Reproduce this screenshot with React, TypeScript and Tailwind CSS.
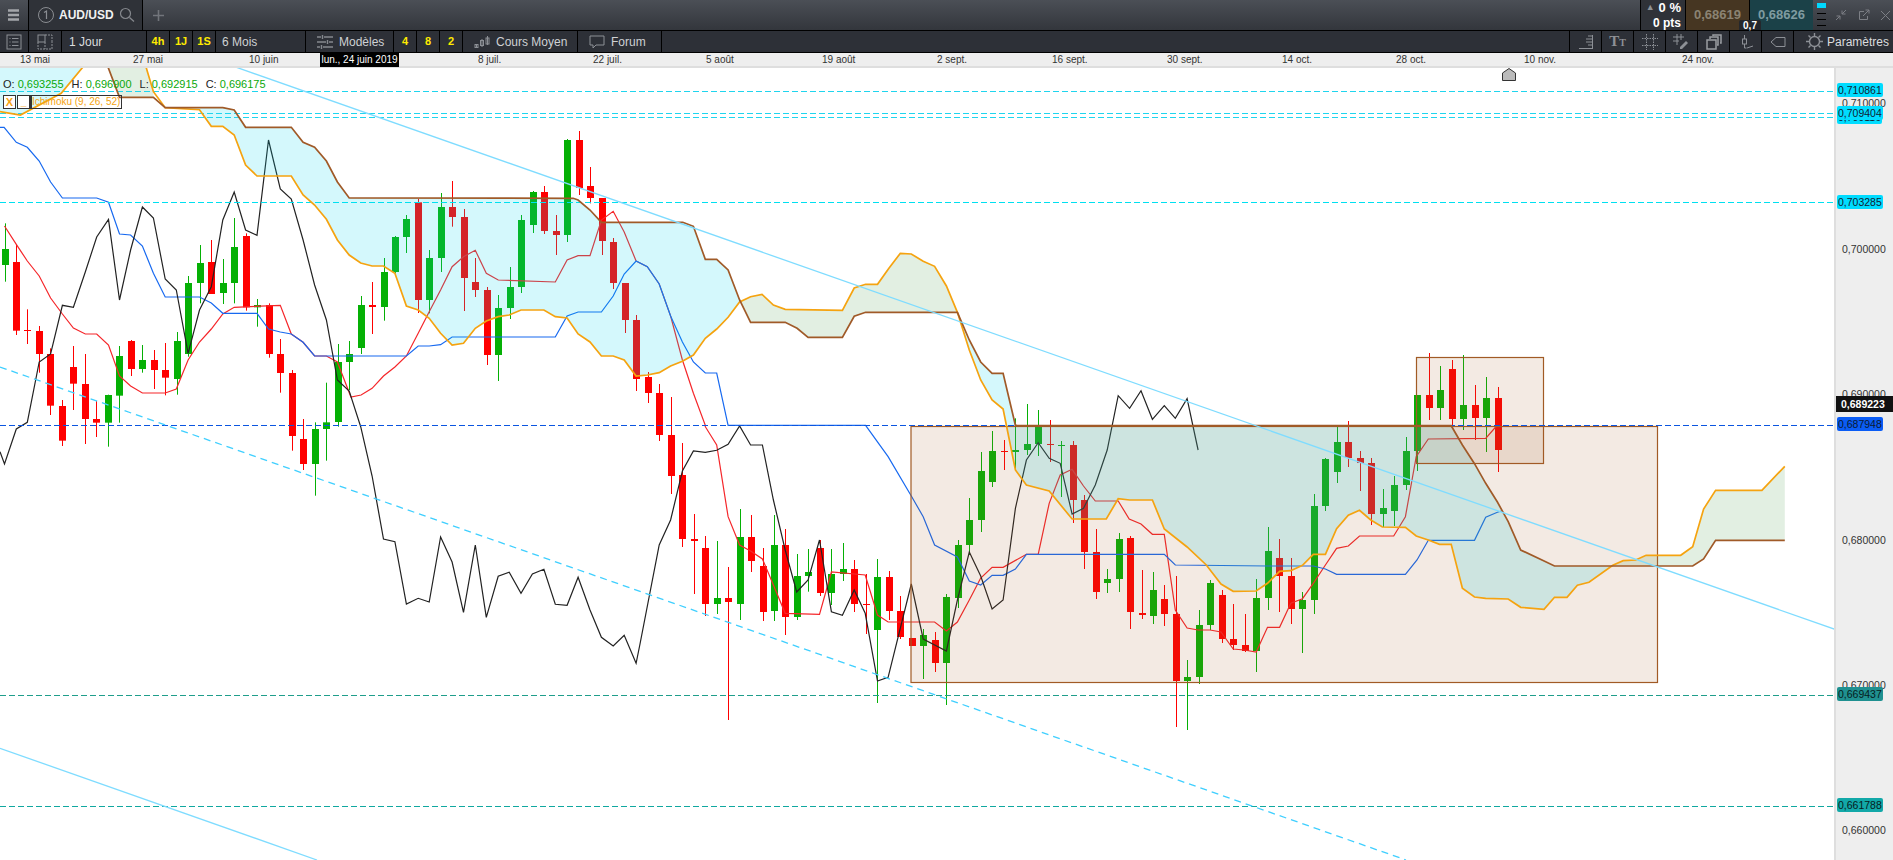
import React from 'react';

type Pt = [number, number];
type Origin = { x: number; y: number; sx: number };

// readings were taken off 3 crops of the chart, so each keeps its own origin
const C3: Origin = { x: 0, y: 60, sx: 0.408 };
const C7: Origin = { x: 640, y: 60, sx: 0.408 };
const C4: Origin = { x: 640, y: 400, sx: 0.408 };
const C5: Origin = { x: 1240, y: 330, sx: 0.4165 };

const map = (o: Origin, pts: number[][]): Pt[] => pts.map(([x, y]) => [o.x + x * o.sx, o.y + y / 3]);
const toStr = (pts: Pt[]) => pts.map(([x, y]) => `${x.toFixed(1)},${y.toFixed(1)}`).join(' ');

const yAt = (path: Pt[], x: number) => {
  for (let i = 1; i < path.length; i++) {
    const [x0, y0] = path[i - 1];
    const [x1, y1] = path[i];
    if (x >= x0 && x <= x1) return x1 === x0 ? y1 : y0 + ((x - x0) / (x1 - x0)) * (y1 - y0);
  }
  return path[path.length - 1][1];
};

const between = (path: Pt[], x0: number, x1: number): Pt[] => [
  [x0, yAt(path, x0)],
  ...path.filter(([x]) => x > x0 && x < x1),
  [x1, yAt(path, x1)],
];

// wickTop, bodyTop, bodyBottom, wickBottom, 1 = green
const candlesA = [
  [490, 567, 615, 665, 1], [553, 606, 812, 825, 0], [748, 810, 813, 852, 0], [798, 813, 882, 938, 0], [865, 882, 1037, 1065, 0],
  [1020, 1038, 1142, 1158, 0], [858, 921, 971, 1050, 0], [882, 972, 1077, 1152, 0], [1023, 1077, 1088, 1131, 0], [1004, 1005, 1088, 1160, 1],
  [858, 888, 1007, 1088, 1], [840, 843, 927, 948, 0], [855, 900, 927, 938, 1], [870, 900, 930, 987, 0], [849, 930, 953, 1006, 0],
  [816, 843, 957, 1004, 1], [648, 669, 882, 890, 1], [555, 609, 669, 730, 1], [540, 606, 702, 702, 0], [597, 669, 699, 732, 1],
  [474, 561, 669, 730, 1], [520, 528, 742, 752, 0], [717, 735, 742, 800, 1], [730, 735, 882, 893, 0], [837, 882, 939, 998, 0],
  [930, 939, 1128, 1172, 0], [1077, 1137, 1212, 1230, 0], [1087, 1107, 1212, 1307, 1], [968, 1087, 1107, 1202, 1], [852, 906, 1086, 1100, 1],
  [843, 882, 906, 990, 1], [708, 735, 864, 882, 1], [666, 735, 741, 822, 0], [594, 636, 741, 782, 1], [528, 531, 636, 640, 1],
  [465, 477, 531, 579, 1], [417, 427, 720, 759, 0], [570, 594, 720, 760, 1], [399, 441, 594, 636, 1], [363, 441, 471, 500, 0],
  [447, 471, 654, 753, 0], [594, 666, 690, 711, 0], [681, 690, 885, 915, 0], [705, 744, 885, 963, 1], [621, 681, 744, 777, 1],
  [465, 480, 681, 699, 1], [393, 396, 495, 519, 1], [378, 396, 513, 522, 0], [465, 513, 525, 585, 0], [237, 240, 525, 546, 1],
  [213, 240, 384, 405, 0], [321, 378, 414, 430, 0], [414, 414, 543, 585, 0], [534, 546, 669, 687, 0], [669, 669, 780, 819, 0],
  [765, 780, 957, 993, 0], [936, 951, 999, 1029, 0], [972, 999, 1125, 1143, 0],
];
const candlesB = [
  [-9, 105, 228, 282, 0], [129, 225, 417, 441, 0], [342, 417, 423, 582, 0], [408, 444, 612, 648, 0], [423, 594, 612, 642, 1],
  [501, 594, 606, 960, 0], [327, 411, 612, 660, 1], [345, 411, 483, 516, 0], [444, 498, 636, 663, 0], [345, 435, 633, 663, 1],
  [387, 435, 651, 705, 0], [462, 528, 651, 660, 1], [447, 516, 528, 575, 1], [420, 444, 579, 588, 0], [447, 522, 579, 615, 1],
  [429, 507, 522, 543, 1], [480, 507, 612, 636, 0], [522, 612, 615, 702, 0], [477, 531, 690, 909, 1], [513, 531, 633, 660, 0],
  [588, 633, 711, 717, 0], [714, 714, 738, 738, 0], [687, 705, 738, 837, 1], [696, 720, 789, 816, 0], [582, 591, 789, 915, 1],
  [420, 435, 594, 624, 1], [294, 360, 435, 465, 1], [156, 213, 360, 396, 1], [93, 153, 246, 261, 1], [120, 153, 156, 210, 0],
  [55, 150, 156, 210, 1], [12, 132, 150, 165, 1], [30, 81, 132, 168, 1], [60, 132, 135, 186, 0], [123, 135, 138, 291, 1],
  [123, 135, 300, 369, 0], [285, 300, 456, 507, 0], [387, 456, 576, 597, 0], [507, 537, 549, 579, 1], [399, 417, 537, 576, 1],
  [408, 414, 636, 687, 0], [510, 639, 645, 657, 0], [516, 570, 648, 672, 1], [555, 597, 642, 678, 0], [528, 642, 843, 981, 0],
  [780, 831, 843, 990, 1], [630, 675, 831, 852, 1], [540, 549, 675, 690, 1], [570, 585, 717, 729, 0], [612, 717, 735, 750, 0],
  [642, 735, 753, 756, 0], [537, 594, 753, 816, 1],
];
const candlesC = [
  [591, 663, 804, 840, 1], [627, 684, 738, 846, 0], [684, 738, 837, 882, 0], [786, 810, 837, 969, 1], [492, 528, 810, 852, 1],
  [384, 387, 528, 543, 1], [288, 336, 426, 459, 1], [273, 336, 384, 411, 0], [363, 384, 399, 483, 0], [384, 399, 552, 585, 0],
  [477, 534, 552, 591, 1], [438, 465, 543, 588, 1], [321, 363, 465, 480, 1], [195, 195, 363, 423, 1], [69, 195, 234, 270, 0],
  [108, 180, 234, 270, 1], [90, 117, 267, 288, 0], [75, 225, 267, 300, 1], [165, 225, 264, 330, 0], [141, 204, 264, 366, 1],
  [171, 204, 360, 426, 0],
];
const candles = [
  ...candlesA.map((c) => ({ c, oy: C3.y })),
  ...candlesB.map((c) => ({ c, oy: C4.y })),
  ...candlesC.map((c) => ({ c, oy: C5.y })),
];

const kijun: Pt[] = [
  ...map(C3, [[0, 202], [10, 202], [40, 247], [67, 262], [96, 303], [124, 366], [153, 414], [237, 414], [266, 427], [293, 522], [320, 525], [349, 558], [376, 640], [405, 711], [489, 711], [518, 729], [546, 760], [630, 760], [658, 807], [687, 816], [714, 822], [743, 847], [771, 888], [996, 888], [1025, 858], [1052, 858], [1080, 854], [1108, 831], [1361, 831], [1390, 768], [1417, 756], [1474, 756], [1503, 708], [1530, 642], [1559, 603]]),
  ...map(C7, [[18, 620], [47, 672], [75, 768], [104, 846], [131, 906], [160, 939], [188, 939], [216, 1096]]),
  ...map(C4, [[553, 76], [608, 170], [665, 288], [694, 350], [722, 435], [778, 471], [807, 543], [835, 555], [863, 526], [890, 526], [920, 507], [947, 463], [1285, 463], [1312, 495], [1538, 498]]),
  ...map(C5, [[176, 708], [205, 717], [232, 733], [397, 733], [425, 690], [452, 631], [563, 631], [590, 562], [618, 547], [628, 543]]),
];

const tenkan: Pt[] = [
  ...map(C3, [[11, 498], [40, 553], [67, 603], [96, 648], [124, 714], [153, 762], [180, 804], [209, 822], [237, 822], [266, 855], [293, 948], [320, 978], [349, 999], [405, 999], [432, 987], [461, 900], [489, 846], [518, 807], [546, 762], [574, 742], [687, 736], [714, 822], [743, 847], [771, 888], [800, 888], [827, 906], [860, 1011], [885, 1005], [912, 985], [940, 948], [968, 921], [996, 888], [1025, 820], [1052, 755], [1080, 690], [1108, 620], [1136, 590], [1165, 571], [1192, 640], [1221, 660], [1361, 666], [1390, 600], [1417, 587], [1446, 587], [1474, 480], [1503, 454], [1530, 516], [1559, 603]]),
  ...map(C7, [[18, 620], [47, 672], [75, 768], [104, 900], [131, 1000], [160, 1096]]),
  ...map(C4, [[160, 80], [188, 135], [216, 350], [244, 435], [271, 453], [300, 477], [327, 555], [356, 640], [440, 643], [469, 516], [552, 525], [582, 645], [608, 666], [722, 666], [751, 693], [778, 666], [807, 600], [835, 534], [863, 502], [890, 502], [947, 463], [976, 463], [1003, 310], [1030, 225], [1059, 208], [1087, 258], [1116, 303], [1172, 303], [1199, 357], [1228, 372], [1256, 403], [1285, 403], [1312, 630], [1341, 684], [1368, 690], [1397, 690], [1424, 696], [1454, 747], [1481, 750]]),
  ...map(C5, [[39, 966], [66, 892], [95, 892], [122, 820], [150, 806], [176, 760], [205, 705], [232, 655], [260, 648], [287, 618], [369, 618], [397, 560], [423, 380], [452, 327], [590, 325], [618, 285]]),
];

const chikou: Pt[] = [
  ...map(C3, [[0, 1175], [11, 1212], [40, 1107], [67, 1087], [96, 906], [124, 882], [153, 736], [180, 742], [209, 636], [237, 531], [266, 478], [293, 720], [320, 570], [349, 441], [376, 474], [405, 657], [432, 690], [461, 880], [489, 750], [518, 680], [546, 480], [574, 396], [602, 510], [630, 526], [658, 240], [687, 387], [714, 417], [743, 540], [771, 675], [800, 780], [827, 960], [856, 993], [884, 1100], [912, 1248], [940, 1437], [968, 1445], [996, 1632], [1025, 1615], [1052, 1626], [1080, 1431], [1108, 1506], [1136, 1657], [1165, 1455], [1192, 1672], [1221, 1549], [1248, 1537], [1277, 1600], [1305, 1542], [1333, 1528], [1361, 1633], [1390, 1636], [1417, 1552], [1446, 1650], [1474, 1732], [1503, 1758], [1530, 1726], [1559, 1810]]),
  ...map(C4, [[0, 732], [47, 435], [75, 360], [104, 213], [131, 153], [160, 157], [188, 151], [216, 133], [244, 78], [271, 135], [300, 135], [327, 300], [356, 450], [384, 576], [412, 540], [440, 420], [469, 635], [496, 646], [525, 570], [552, 640], [582, 843], [608, 832], [665, 552], [694, 717], [751, 753], [778, 600], [807, 456], [835, 528], [863, 627], [890, 600], [920, 325], [947, 180], [976, 128], [1003, 175], [1030, 190], [1059, 342], [1087, 325], [1116, 255], [1145, 150]]),
  ...map(C7, [[1172, 1007], [1200, 1045], [1228, 992], [1256, 1078], [1285, 1037], [1312, 1075], [1341, 1016], [1368, 1170]]),
];

const spanAHead: Pt[] = map(C3, [[0, 155], [50, 165], [150, 100], [204, 20]]);
const spanA: Pt[] = [
  ...map(C3, [[358, 22], [376, 95], [405, 143], [489, 149], [518, 199], [546, 199], [574, 225], [602, 315], [630, 348], [714, 348], [743, 405], [771, 435], [800, 478], [827, 540], [856, 585], [884, 609], [912, 618], [940, 618], [968, 640], [996, 738], [1025, 750], [1052, 775], [1080, 820], [1108, 855], [1136, 850], [1165, 805], [1192, 783], [1221, 770], [1248, 765], [1277, 750], [1333, 750], [1361, 770], [1390, 774], [1417, 822], [1446, 846], [1474, 888], [1503, 888], [1530, 900], [1559, 948]]),
  ...map(C7, [[18, 945], [47, 938], [75, 918], [104, 904], [131, 885], [160, 835], [188, 807], [216, 772], [244, 726], [271, 710], [299, 703], [327, 735], [356, 748], [496, 751], [525, 684], [553, 673], [582, 673], [610, 625], [638, 580], [665, 582], [694, 604], [722, 619], [751, 678], [778, 757], [807, 870], [835, 960], [863, 1020], [890, 1047]]),
  ...map(C4, [[920, 210], [947, 255], [1003, 273], [1059, 357], [1143, 357], [1172, 296], [1200, 300], [1256, 300], [1285, 387], [1341, 441], [1388, 495], [1424, 552], [1454, 574], [1510, 573]]),
  ...map(C5, [[66, 760], [95, 724], [122, 722], [150, 706], [176, 673], [205, 673], [232, 596], [260, 556], [287, 541], [314, 570], [342, 591], [397, 592], [423, 618], [452, 630], [479, 643], [507, 643], [534, 775], [563, 801], [590, 805], [644, 807], [674, 832], [730, 838], [755, 802], [785, 802], [810, 766], [838, 757], [895, 706], [920, 692], [950, 690], [975, 676], [1058, 676], [1087, 650], [1113, 537], [1142, 481], [1253, 481], [1308, 409]]),
];

const spanB: Pt[] = [
  ...map(C3, [[265, 22], [293, 112], [376, 112], [405, 143], [546, 143], [574, 150], [602, 202], [714, 202], [743, 247], [771, 262], [800, 303], [827, 366], [856, 414], [1405, 415], [1417, 420], [1446, 450], [1474, 487]]),
  ...map(C7, [[105, 487], [131, 499], [160, 598], [188, 598], [216, 630], [244, 720], [271, 787], [356, 787], [385, 805], [412, 832], [496, 832], [525, 769], [553, 757], [778, 757], [807, 840], [835, 906], [863, 940], [890, 940], [920, 1096]]),
  ...map(C5, [[507, 287], [534, 345], [563, 401], [590, 460], [618, 516], [644, 575], [674, 660], [725, 690], [755, 708], [1087, 708], [1113, 687], [1142, 631], [1308, 631]]),
];

const cloud = (x0: number, x1: number): Pt[] => [...between(spanB, x0, x1), ...between(spanA, x0, x1).reverse()];

const cyanClouds: Pt[][] = [
  [[0, 68], [83, 68], [83, 66.7], ...[...spanAHead].reverse()],
  cloud(165.2, 741),
  cloud(957.4, 1612.8),
];
const greenClouds: Pt[][] = [
  map(C3, [[265, 22], [358, 22], [376, 95], [376, 112], [293, 112]]),
  cloud(741, 957.4),
  cloud(1612.8, 1784.8),
];

const hLines = [
  { y: 91.5, color: '#1fd5ee' },
  { y: 113.5, color: '#1fd5ee' },
  { y: 117.5, color: '#1fd5ee' },
  { y: 202.5, color: '#00e0f0' },
  { y: 425.5, color: '#0b55e0' },
  { y: 695.5, color: '#1f9e8b' },
  { y: 806.5, color: '#10a8a0' },
];

const dates = [
  { x: 20, t: '13 mai' }, { x: 133, t: '27 mai' }, { x: 249, t: '10 juin' }, { x: 478, t: '8 juil.' },
  { x: 593, t: '22 juil.' }, { x: 706, t: '5 août' }, { x: 822, t: '19 août' }, { x: 937, t: '2 sept.' },
  { x: 1052, t: '16 sept.' }, { x: 1167, t: '30 sept.' }, { x: 1282, t: '14 oct.' }, { x: 1396, t: '28 oct.' },
  { x: 1524, t: '10 nov.' }, { x: 1682, t: '24 nov.' },
];

const ticks = [
  { y: 103, t: '0,710000' }, { y: 249, t: '0,700000' }, { y: 394, t: '0,690000' },
  { y: 540, t: '0,680000' }, { y: 685, t: '0,670000' }, { y: 830, t: '0,660000' },
];

const badges = [
  { y: 90, t: '0,710861', cls: 'bg-[#00dcff] text-[#123]' },
  { y: 117, t: '0,709116', cls: 'bg-[#00dcff] text-[#123]' },
  { y: 113, t: '0,709404', cls: 'bg-[#00dcff] text-[#123]' },
  { y: 202, t: '0,703285', cls: 'bg-[#00dcff] text-[#123]' },
  { y: 424, t: '0,687948', cls: 'bg-[#0a5cf5] text-[#0a1a33]' },
  { y: 694, t: '0,669437', cls: 'bg-[#1f9090] text-[#062020]' },
  { y: 805, t: '0,661788', cls: 'bg-[#12a8a8] text-[#062020]' },
];

const ic = 'fill-none stroke-[#8d9096]';

const Cell = ({ w, children, className = '' }: { w: string; children?: React.ReactNode; className?: string }) => (
  <div className={`flex h-full shrink-0 items-center border-r border-black ${w} ${className}`}>{children}</div>
);

const Yellow = ({ w, t }: { w: string; t: string }) => (
  <Cell w={w} className="justify-center text-[11px] font-bold text-[#ffea00]">{t}</Cell>
);

const IconCell = ({ children }: { children: React.ReactNode }) => (
  <div className="flex h-full w-[32px] shrink-0 items-center justify-center border-l border-black">{children}</div>
);

const TopBar = () => (
  <div className="flex h-[31px] shrink-0 items-stretch border-b border-black bg-linear-to-b from-[#4b4f56] to-[#33363c] text-white">
    <div className="flex w-[29px] shrink-0 items-center justify-center border-r border-black">
      <svg width="14" height="12" viewBox="0 0 14 12"><path d="M1 1.500h11M1 6h11M1 10.500h11" stroke="#a4a6aa" strokeWidth="2.4" fill="none" /></svg>
    </div>
    <div className="flex w-[114px] shrink-0 items-center border-r border-black bg-[#2f3238] pl-[8px]">
      <svg width="18" height="18" viewBox="0 0 18 18">
        <circle cx="9" cy="9" r="7.500" fill="none" stroke="#8a8d92" />
        <path d="M7 6.500 9.500 5v8" fill="none" stroke="#8a8d92" strokeWidth="1.2" />
      </svg>
      <span className="ml-[4px] text-[12px] font-bold text-[#f1f1f1]">AUD/USD</span>
      <svg className="ml-[5px]" width="16" height="16" viewBox="0 0 16 16">
        <circle cx="6.500" cy="6.500" r="5" fill="none" stroke="#85888d" strokeWidth="1.2" />
        <path d="m10.500 10.500 4.500 4" stroke="#85888d" strokeWidth="1.4" />
      </svg>
    </div>
    <div className="flex w-[30px] items-center justify-center">
      <svg width="11" height="11" viewBox="0 0 11 11"><path d="M5.500 0v11M0 5.500h11" stroke="#72757b" strokeWidth="1.6" /></svg>
    </div>
    <div className="flex-1" />
    <div className="flex w-[46px] shrink-0 flex-col items-end justify-center border-x border-black bg-[#2f3238] pr-[4px] font-bold leading-none">
      <div className="flex items-center text-[13px]"><span className="mr-[4px] text-[9px] text-[#8f9296]">▲</span>0 %</div>
      <div className="mt-[3px] text-[12px]">0 pts</div>
    </div>
    <div className="flex w-[63px] shrink-0 items-center justify-center bg-[#463622] text-[13px] font-bold text-[#8b8373]">0,68619</div>
    <div className="relative flex w-[64px] shrink-0 items-center justify-center border-l border-black bg-[#1b4148] text-[13px] font-bold text-[#7f9ba0]">
      0,68626
      <div className="absolute bottom-0 left-[-11px] flex h-[10px] w-[22px] items-center justify-center rounded-t-[2px] bg-[#24272c] text-[10px] text-white">0,7</div>
    </div>
    <div className="flex w-[80px] shrink-0 items-center">
      <div className="ml-[4px] flex w-[9px] flex-col gap-[5px] self-start pt-[3px]">
        <div className="h-[5px] bg-[#00d8ff]" />
        <div className="h-px bg-black" />
        <div className="h-px bg-black" />
        <div className="h-px bg-black" />
      </div>
      <svg className="ml-[9px]" width="12" height="12" viewBox="0 0 12 12">
        <path d="M7 5 11 1M7 1.500V5h3.500M5 7 1 11M1.500 7H5v3.500" stroke="#7c7f85" fill="none" />
      </svg>
      <svg className="ml-[11px]" width="12" height="12" viewBox="0 0 12 12">
        <path d="M9.500 7v3.500h-8v-8H6M5 7l6-6M7.500 1H11v3.500" stroke="#7c7f85" fill="none" />
      </svg>
      <svg className="ml-[10px]" width="11" height="11" viewBox="0 0 11 11"><path d="m1 1 9 9M10 1l-9 9" stroke="#7c7f85" /></svg>
    </div>
  </div>
);

const ToolBar = () => (
  <div className="flex h-[22px] shrink-0 items-stretch border-b border-black bg-[#2d3037] text-[12px] text-[#cfd1d4]">
    <Cell w="w-[29px]" className="justify-center">
      <svg width="16" height="16" viewBox="0 0 16 16" className={ic}>
        <rect x="1" y="1" width="14" height="14" />
        <path d="M3.500 4.500h1M6 4.500h6.500M3.500 8h1M6 8h6.500M3.500 11.500h1M6 11.500h6.500" />
      </svg>
    </Cell>
    <Cell w="w-[33px]" className="justify-center">
      <svg width="16" height="16" viewBox="0 0 16 16" className={ic}>
        <rect x="1" y="1" width="7" height="7" />
        <path d="M8 1h7v7M1 8v7h14V8M8 8v7" strokeDasharray="2 1" />
      </svg>
    </Cell>
    <Cell w="w-[85px]" className="pl-[7px] text-[#dcdddf]">1 Jour</Cell>
    <Yellow w="w-[23px]" t="4h" />
    <Yellow w="w-[23px]" t="1J" />
    <Yellow w="w-[23px]" t="1S" />
    <Cell w="w-[90px]" className="pl-[6px]">6 Mois</Cell>
    <Cell w="w-[88px]" className="pl-[11px]">
      <svg width="16" height="14" viewBox="0 0 16 14" className="mr-[6px] stroke-[#85888e]" fill="none">
        <path d="M0 2h4M7 2h9M5.500 0v4M0 7h9M12 7h4M10.500 5v4M0 12h3M6 12h10M4.500 10v4" strokeWidth="1.4" />
      </svg>
      Modèles
    </Cell>
    <Yellow w="w-[23px]" t="4" />
    <Yellow w="w-[23px]" t="8" />
    <Yellow w="w-[23px]" t="2" />
    <Cell w="w-[115px]" className="pl-[11px]">
      <svg width="16" height="14" viewBox="0 0 16 14" className={`mr-[6px] ${ic}`}>
        <path d="M2.500 9v4M8 4v8M13.500 1v9" />
        <rect x="1" y="9.500" width="3" height="3" />
        <rect x="6.500" y="5.500" width="3" height="5" />
        <rect x="12" y="3" width="3" height="6" />
      </svg>
      Cours Moyen
    </Cell>
    <Cell w="w-[84px]" className="pl-[11px]">
      <svg width="16" height="14" viewBox="0 0 16 14" className={`mr-[6px] ${ic}`}>
        <path d="M1 1h14v9H7l-3 3v-3H1z" />
      </svg>
      Forum
    </Cell>
    <div className="flex-1" />
    <IconCell>
      <svg width="16" height="16" viewBox="0 0 16 16" className={ic}><path d="M1 14.500h14M14.500 1v13M10 2h4M8 5h6M8 8h6M10 11h4" /></svg>
    </IconCell>
    <IconCell>
      <span className="font-['Liberation_Serif',serif] font-bold text-[#8d9096]"><span className="text-[15px]">T</span><span className="text-[10px]">T</span></span>
    </IconCell>
    <IconCell>
      <svg width="16" height="16" viewBox="0 0 16 16" className={ic} strokeDasharray="1.500 1"><path d="M4.500 0v16M11.500 0v16M0 4.500h16M0 11.500h16" /></svg>
    </IconCell>
    <IconCell>
      <svg width="17" height="17" viewBox="0 0 17 17" fill="none">
        <path d="M4 1v11M8 1v6M0 4h11M0 8h6" stroke="#8d9096" />
        <path d="m7 14 6-6 2 2-6 6H7z" fill="#8d9096" />
      </svg>
    </IconCell>
    <IconCell>
      <svg width="16" height="16" viewBox="0 0 16 16" fill="none" stroke="#9a9da2" strokeWidth="1.5">
        <rect x="1" y="6" width="9" height="9" />
        <path d="M4 5V3h8v8h-1M7 2V1h8v8h-1" />
      </svg>
    </IconCell>
    <IconCell>
      <svg width="16" height="16" viewBox="0 0 16 16" className={ic}>
        <path d="M6.500 1v4M6.500 10v4M6.500 14h2M9 14l6-2" />
        <rect x="4.500" y="5" width="4" height="5" />
      </svg>
    </IconCell>
    <IconCell>
      <svg width="16" height="12" viewBox="0 0 16 12" className={ic}><path d="M15 1.500H6L1 6l5 4.500h9z" /></svg>
    </IconCell>
    <div className="flex h-full w-[100px] shrink-0 items-center border-l border-black pl-[11px] text-[#dcdddf]">
      <svg width="19" height="19" viewBox="0 0 19 19" className="mr-[3px]" fill="none" stroke="#8d9096" strokeWidth="1.4">
        <circle cx="9.500" cy="9.500" r="5" />
        <path d="M9.500 1v3M9.500 15v3M1 9.500h3M15 9.500h3M3.500 3.500l2 2M13.500 13.500l2 2M15.500 3.500l-2 2M5.500 13.500l-2 2" />
      </svg>
      Paramètres
    </div>
  </div>
);

const DateStrip = () => (
  <div className="relative h-[15px] shrink-0 border-b-2 border-[#dedede] bg-[#eeeeee] text-[10px] leading-[14px] text-[#333]">
    {dates.map((d) => (
      <span key={d.t} className="absolute top-0" style={{ left: d.x }}>{d.t}</span>
    ))}
    <span className="absolute left-[320px] top-0 h-[14px] w-[79px] bg-black text-center text-white">lun., 24 juin 2019</span>
  </div>
);

const Chart = () => (
  <div className="relative h-full w-[1834px] shrink-0 overflow-hidden bg-white">
    <svg width="1834" height="792" viewBox="0 68 1834 792" className="block">
      {candles.map(({ c, oy }, i) => {
        const x = Math.round(4.5 + 11.485 * i);
        const color = c[4] ? '#05b005' : '#ff0000';
        const top = oy + c[1] / 3;
        return (
          <g key={i} fill={color}>
            <rect x={x} y={oy + c[0] / 3} width="1" height={(c[3] - c[0]) / 3} />
            <rect x={x - 3} y={top} width="7" height={Math.max((c[2] - c[1]) / 3, 1)} />
          </g>
        );
      })}
      <polyline points={toStr(tenkan)} fill="none" stroke="#f5262a" strokeWidth="1.2" />
      <polyline points={toStr(kijun)} fill="none" stroke="#1769f0" strokeWidth="1.2" />
      <polyline points={toStr(chikou)} fill="none" stroke="#222222" strokeWidth="1.2" />
      {cyanClouds.map((p, i) => (
        <polygon key={i} points={toStr(p)} fill="rgba(0,214,237,0.17)" />
      ))}
      {greenClouds.map((p, i) => (
        <polygon key={i} points={toStr(p)} fill="rgba(60,150,60,0.15)" />
      ))}
      <rect x="911" y="426.5" width="746.5" height="256" fill="rgba(165,95,40,0.13)" stroke="#a15a25" strokeWidth="1.2" />
      <rect x="1416.5" y="357.5" width="127" height="106" fill="rgba(165,95,40,0.13)" stroke="#a15a25" strokeWidth="1.2" />
      {hLines.map((l) => (
        <line key={l.y} x1="0" x2="1834" y1={l.y} y2={l.y} stroke={l.color} strokeWidth="1" strokeDasharray="6 3" />
      ))}
      <polyline points={toStr(spanAHead)} fill="none" stroke="#f5a310" strokeWidth="1.7" />
      <polyline points={toStr(spanA)} fill="none" stroke="#f5a310" strokeWidth="1.7" />
      <polyline points={toStr(spanB)} fill="none" stroke="#a05a28" strokeWidth="1.7" />
      <line x1="234.7" y1="66.7" x2="1834.8" y2="629.3" stroke="#7fdcff" strokeWidth="1.3" />
      <line x1="0" y1="748.3" x2="317" y2="860" stroke="#7fdcff" strokeWidth="1.3" />
      <line x1="0" y1="367" x2="1406" y2="860" stroke="#3fcfff" strokeWidth="1.3" strokeDasharray="7 5" />
    </svg>

    <div className="absolute left-[3px] top-[9px] flex text-[11px] leading-[14px] text-[#222]">
      <span>O:&nbsp;</span><span className="mr-[8px] text-[#0aa80a]">0,693255</span>
      <span>H:&nbsp;</span><span className="mr-[8px] text-[#0aa80a]">0,696900</span>
      <span>L:&nbsp;</span><span className="mr-[8px] text-[#0aa80a]">0,692915</span>
      <span>C:&nbsp;</span><span className="text-[#0aa80a]">0,696175</span>
    </div>
    <div className="absolute left-[3px] top-[27px] flex h-[14px] text-[10px] leading-[12px] text-[#f5a310]">
      <div className="flex w-[13px] items-center justify-center border border-[#333] bg-white text-[11px] font-bold">X</div>
      <div className="ml-px flex w-[13px] items-end justify-center border border-[#333] bg-white font-bold">_</div>
      <div className="border border-l-2 border-[#333] pr-[1px]">Ichimoku (9, 26, 52)</div>
    </div>
    <svg className="absolute left-[1502px] top-0" width="14" height="13" viewBox="0 0 14 13">
      <path d="M.5 12.5V5L7 .5 13.5 5v7.500z" fill="#bbbbbb" stroke="#333" />
    </svg>
  </div>
);

const PriceAxis = () => (
  <div className="relative h-full flex-1 overflow-hidden border-l-2 border-[#dedede] bg-[#eeeeee] text-[10.5px] leading-[14px]">
    {ticks.map((t) => (
      <span key={t.t} className="absolute left-[6px] text-[#333]" style={{ top: t.y - 68 - 7 }}>{t.t}</span>
    ))}
    {badges.map((b) => (
      <span key={b.t} className={`absolute left-[1px] h-[14px] rounded-[2px] px-[1px] ${b.cls}`} style={{ top: b.y - 68 - 7 }}>{b.t}</span>
    ))}
    <span className="absolute left-0 top-[328px] h-[16px] w-[57px] bg-[#111] pl-[5px] font-bold leading-[16px] text-white">0,689223</span>
  </div>
);

export default function App() {
  return (
    <div className="flex h-[860px] w-[1893px] flex-col overflow-hidden bg-white font-['Liberation_Sans',Arial,sans-serif]">
      <TopBar />
      <ToolBar />
      <DateStrip />
      <div className="flex min-h-0 flex-1">
        <Chart />
        <PriceAxis />
      </div>
    </div>
  );
}
